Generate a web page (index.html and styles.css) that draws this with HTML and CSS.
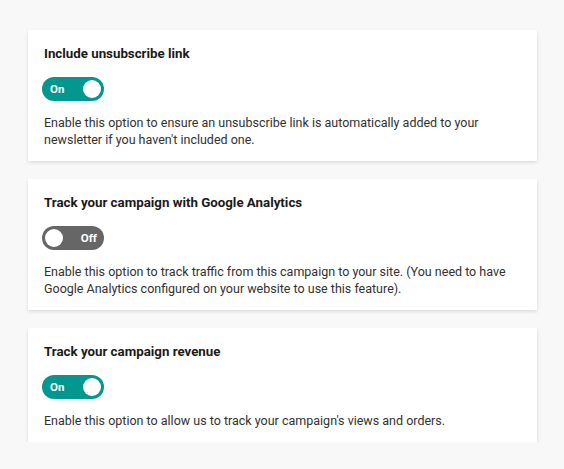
FILE: index.html
```html
<!DOCTYPE html>
<html lang="en">
<head>
    <title>Campaign settings</title>
    <link rel="stylesheet" href="styles.css">
</head>
<body>
    <div class="settings">
        <div class="card">
            <div class="card-title">Include unsubscribe link</div>
            <button class="toggle on">
                <span class="toggle-label">On</span>
                <span class="knob"></span>
            </button>
            <p class="card-text">Enable this option to ensure an unsubscribe link is automatically added to your newsletter if you haven't included one.</p>
        </div>

        <div class="card">
            <div class="card-title">Track your campaign with Google Analytics</div>
            <button class="toggle off">
                <span class="knob"></span>
                <span class="toggle-label">Off</span>
            </button>
            <p class="card-text">Enable this option to track traffic from this campaign to your site. (You need to have Google Analytics configured on your website to use this feature).</p>
        </div>

        <div class="card">
            <div class="card-title">Track your campaign revenue</div>
            <button class="toggle on">
                <span class="toggle-label">On</span>
                <span class="knob"></span>
            </button>
            <p class="card-text">Enable this option to allow us to track your campaign's views and orders.</p>
        </div>
    </div>
    <script>
        document.querySelectorAll('.toggle').forEach(toggle => {
            toggle.addEventListener('click', () => {
                const isOn = toggle.classList.toggle('on');
                toggle.classList.toggle('off', !isOn);
                const label = toggle.querySelector('.toggle-label');
                const knob = toggle.querySelector('.knob');
                label.innerText = isOn ? 'On' : 'Off';
                if (isOn) {
                    toggle.appendChild(knob);
                } else {
                    toggle.insertBefore(knob, label);
                }
            });
        });
    </script>
</body>
</html>
```

FILE: styles.css
```css
body {
    margin: 0;
    background-color: #f8f8f8;
    font-family: Roboto, "Liberation Sans", sans-serif;
    color: #323130;
}

.settings {
    display: flex;
    flex-direction: column;
    gap: 18px;
    width: 509px;
    padding: 30px 0 0 28px;
}

.card {
    background-color: #fff;
    padding: 15px 16px 13px 16px;
    box-shadow: 0 1.6px 3.6px rgba(0, 0, 0, 0.13), 0 0.3px 0.9px rgba(0, 0, 0, 0.11);
}

.card-title {
    font-size: 13.3px;
    font-weight: bold;
    line-height: 18px;
    color: #1b1a19;
}

.toggle {
    display: flex;
    align-items: center;
    justify-content: space-between;
    width: 62px;
    height: 24px;
    margin: 14px 0 13px -2px;
    padding: 0 3px 0 8px;
    border: none;
    border-radius: 12px;
    cursor: pointer;
    font-family: inherit;
}

.toggle.on {
    background-color: #03978f;
}

.toggle.off {
    background-color: #666666;
    padding: 0 7px 0 3px;
}

.toggle-label {
    color: #fff;
    font-size: 11.5px;
    font-weight: bold;
}

.knob {
    width: 18px;
    height: 18px;
    border-radius: 50%;
    background-color: #fff;
}

.card-text {
    margin: 0;
    font-size: 12.5px;
    line-height: 17px;
}
```
